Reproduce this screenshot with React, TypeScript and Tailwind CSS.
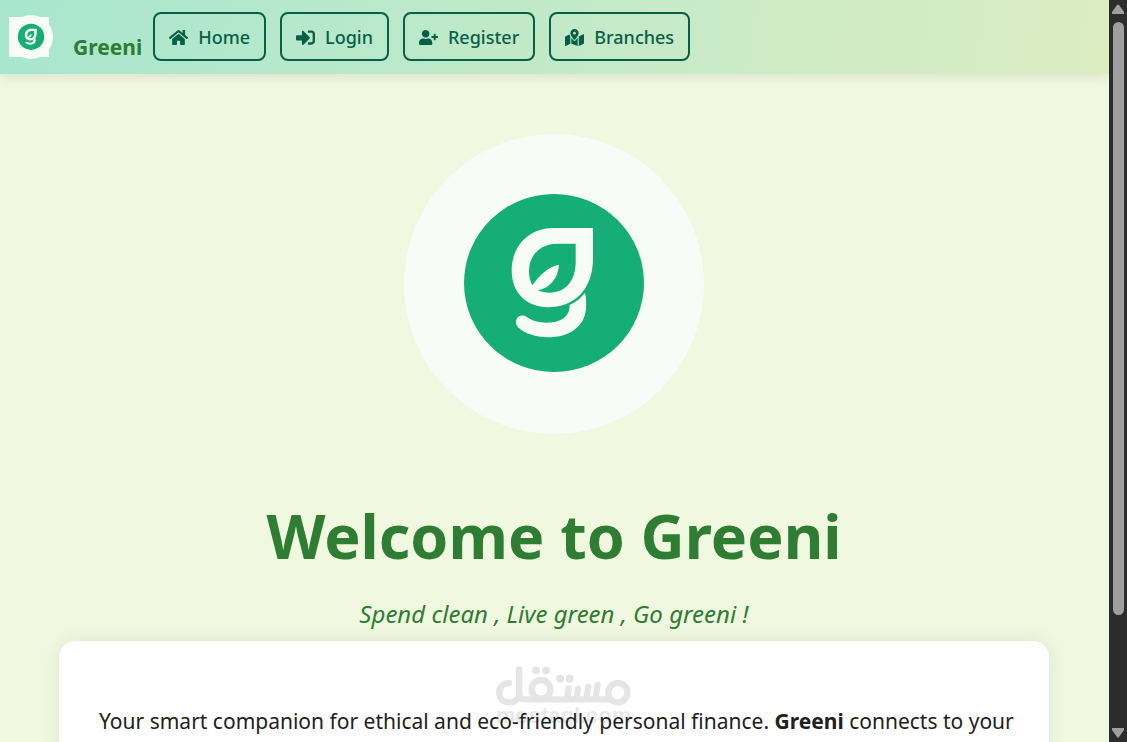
import type { ReactNode } from "react";
import { FaHome, FaMapMarkedAlt, FaSignInAlt, FaUserPlus } from "react-icons/fa";

function GreeniMark({ className }: { className: string }) {
  return (
    <svg viewBox="12 12 900 900" className={className} role="img" aria-label="Greeni logo">
      <circle cx="462" cy="462" r="450" fill="#f7fcf7" />
      <ellipse cx="462" cy="459" rx="270" ry="267" fill="#16ae78" />
      <path
        fill="#f7fcf7"
        fillRule="evenodd"
        d="M460 294H579V385C579 474 527 532 445 532C379 532 335 488 335 421C335 348 387 294 460 294ZM473 341C421 341 387 375 387 424C387 440 390 453 397 466C417 437 447 408 477 404C474 446 449 475 413 481C424 486 437 488 449 488C497 488 527 452 527 397V341Z"
      />
      <path
        fill="#f7fcf7"
        d="M555 488C559 503 559 518 558 537C553 590 509 622 443 622C407 622 374 611 354 592C347 585 346 573 351 565C357 556 370 554 380 561C396 572 418 578 440 578C481 578 509 562 509 525C527 517 543 504 555 488Z"
      />
    </svg>
  );
}

function NavButton({ icon, children }: { icon: ReactNode; children: ReactNode }) {
  return (
    <a
      href="#"
      className="flex h-[49px] items-center gap-2.5 rounded-lg border-2 border-[#065f46] px-3.5 pt-px text-lg font-medium text-[#065f46]"
    >
      {icon}
      {children}
    </a>
  );
}

function Watermark() {
  return (
    <div className="pointer-events-none absolute bottom-4 left-1/2 z-20 flex -translate-x-1/2 flex-col items-center text-black/10">
      <svg viewBox="48 74 406 120" className="h-10 w-[135px]" fill="none" stroke="currentColor" aria-hidden="true">
        <path
          strokeWidth="19"
          strokeLinecap="round"
          strokeLinejoin="round"
          d="M87 125C66 126 57 140 57 154C57 171 69 183 88 183C106 183 117 172 117 154V84M117 154C117 168 122 174 137 174H385M211 144A28 28 0 1 0 155 144A28 28 0 1 0 211 144M266 141L262 170M294 142L290 170M325 136L320 170M353 130L347 170M443 154A29 29 0 1 0 385 154A29 29 0 1 0 443 154"
        />
        <g fill="currentColor" stroke="none">
          <circle cx="168" cy="87" r="12" />
          <circle cx="198" cy="87" r="12" />
          <circle cx="240" cy="112" r="12" />
          <circle cx="269" cy="112" r="12" />
        </g>
      </svg>
      <span className="font-['Liberation_Sans',sans-serif] text-[22px] leading-5 font-bold">mostaql.com</span>
    </div>
  );
}

function ScrollRail() {
  return (
    <div className="flex w-[18px] shrink-0 flex-col items-center justify-between bg-[#2c2c2c] py-1" aria-hidden="true">
      <svg viewBox="0 0 12 10" className="h-2.5 w-3 shrink-0 fill-[#9f9f9f]">
        <path d="M5 1Q6 0 7 1L12 8V10H0V8Z" />
      </svg>
      <div className="my-2 flex w-[11px] flex-1 flex-col">
        <div className="h-[85%] rounded-full bg-[#9f9f9f]" />
      </div>
      <svg viewBox="0 0 12 10" className="h-2.5 w-3 shrink-0 fill-[#9f9f9f]">
        <path d="M5 9Q6 10 7 9L12 2V0H0V2Z" />
      </svg>
    </div>
  );
}

export default function App() {
  return (
    <div className="relative flex h-screen overflow-hidden bg-[#f0f8e0] font-['Segoe_UI','Noto_Sans',sans-serif]">
      <div className="flex min-w-0 flex-1 flex-col overflow-hidden">
        <header className="z-10 flex shrink-0 items-center bg-[linear-gradient(100deg,#a8e6cf,#dcedc1)] px-[9px] pt-3 pb-[13px] shadow-[0_4px_10px_rgba(0,0,0,0.08)]">
          <div className="mr-5 flex size-11 shrink-0 items-center">
            <div className="size-10 bg-[#f7fcf7]">
              <GreeniMark className="-mt-0.5 size-11 max-w-none" />
            </div>
          </div>
          <span className="mr-[11px] pt-5 text-[21px] leading-7 font-bold text-[#2e7d32]">Greeni</span>
          <nav className="flex gap-3.5">
            <NavButton icon={<FaHome className="size-[19px]" />}>Home</NavButton>
            <NavButton icon={<FaSignInAlt className="size-[19px]" />}>Login</NavButton>
            <NavButton icon={<FaUserPlus className="size-[19px]" />}>Register</NavButton>
            <NavButton icon={<FaMapMarkedAlt className="size-[19px]" />}>Branches</NavButton>
          </nav>
        </header>
        <main className="flex flex-col pt-[60px] pr-[60px] pl-[59px] text-center">
          <GreeniMark className="size-[300px] self-center" />
          <h1 className="mt-14 text-[61px] leading-[92px] font-bold text-[#2e7d32]">Welcome to Greeni</h1>
          <p className="mt-3 text-2xl leading-10 text-[#2e7d32] italic">Spend clean , Live green , Go greeni !</p>
          <section className="mt-[7px] rounded-2xl bg-white px-10 pt-16 pb-16 text-left shadow-[0_0_20px_rgba(0,0,0,0.08)]">
            <p className="text-[21px] leading-8 whitespace-nowrap text-[#212121]">
              Your smart companion for ethical and eco-friendly personal finance. <strong>Greeni</strong> connects to your
            </p>
          </section>
        </main>
      </div>
      <ScrollRail />
      <Watermark />
    </div>
  );
}
